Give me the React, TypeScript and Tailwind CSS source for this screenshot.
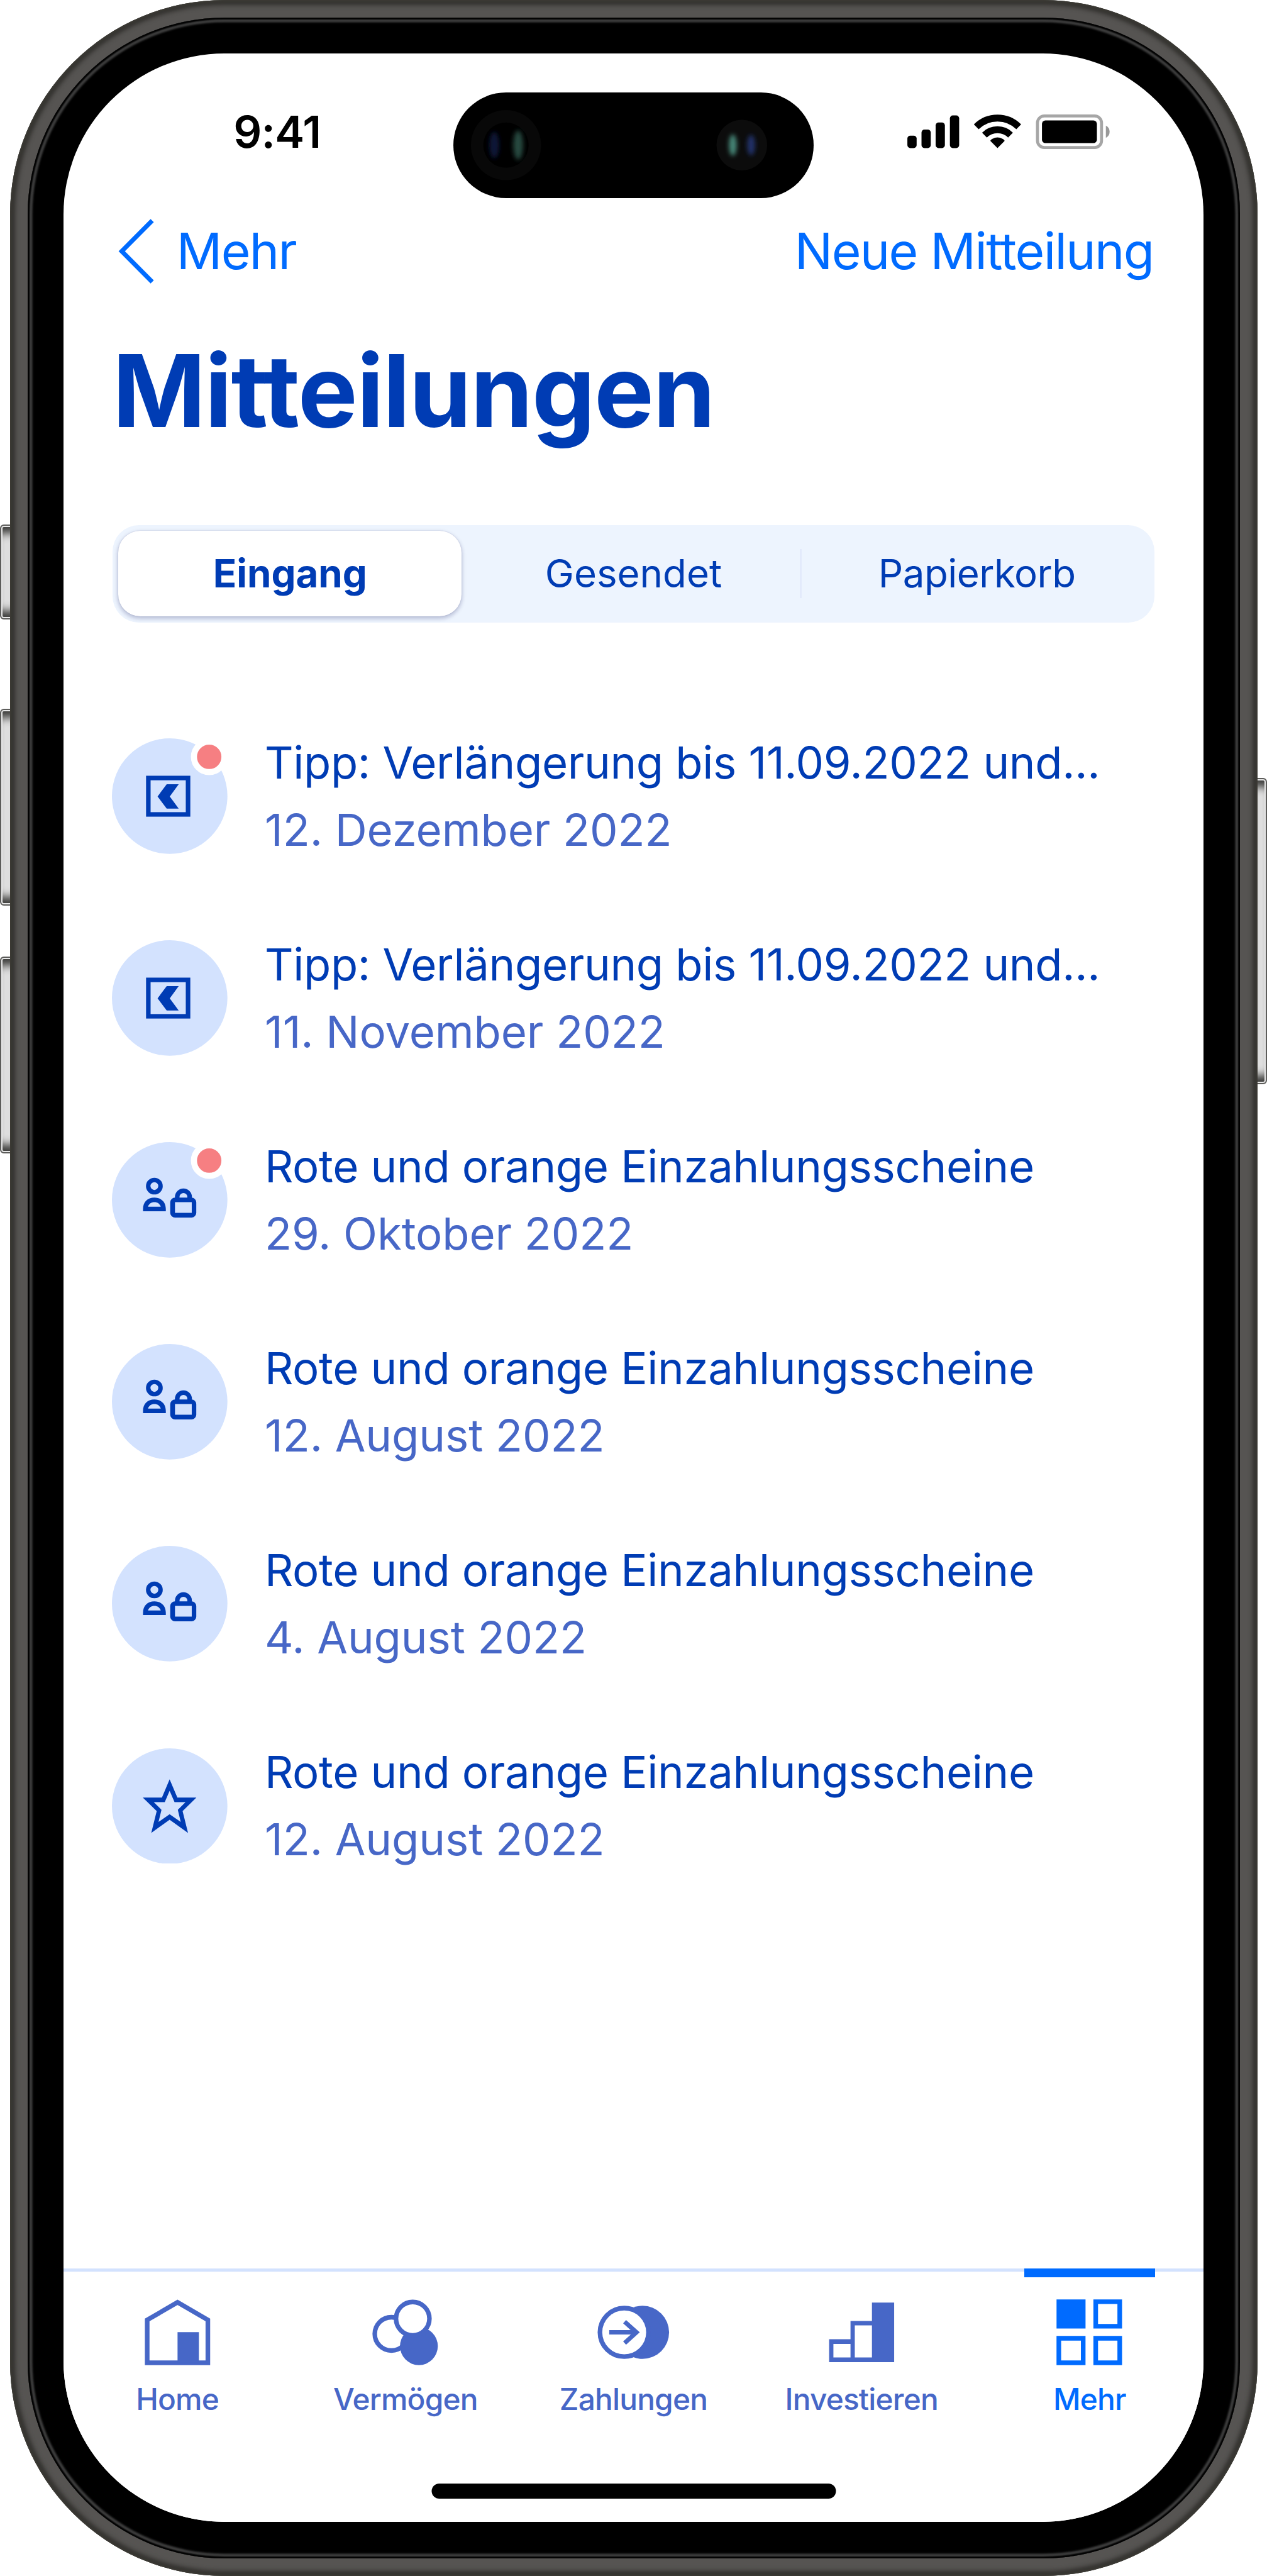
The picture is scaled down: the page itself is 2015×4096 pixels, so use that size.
import type { ReactNode } from "react";

type MessageKind = "tip" | "account" | "star";

interface Message {
  id: number;
  kind: MessageKind;
  title: string;
  date: string;
  unread?: boolean;
}

const MESSAGES: Message[] = [
  { id: 1, kind: "tip", title: "Tipp: Verlängerung bis 11.09.2022 und...", date: "12. Dezember 2022", unread: true },
  { id: 2, kind: "tip", title: "Tipp: Verlängerung bis 11.09.2022 und...", date: "11. November 2022" },
  { id: 3, kind: "account", title: "Rote und orange Einzahlungsscheine", date: "29. Oktober 2022", unread: true },
  { id: 4, kind: "account", title: "Rote und orange Einzahlungsscheine", date: "12. August 2022" },
  { id: 5, kind: "account", title: "Rote und orange Einzahlungsscheine", date: "4. August 2022" },
  { id: 6, kind: "star", title: "Rote und orange Einzahlungsscheine", date: "12. August 2022" },
];

/* ---------- message icons (237 x 237 grid) ---------- */

const MESSAGE_ICONS: Record<MessageKind, ReactNode> = {
  tip: (
    <>
      <rect x="74.7" y="81.4" width="81.5" height="74.7" fill="none" stroke="#003cb4" strokeWidth="9.3" />
      <path d="M93.7 119.2 112.4 94.2H137L118.7 119.2 137 144.2H112.4Z" fill="#003cb4" />
    </>
  ),
  account: (
    <>
      <circle cx="87.1" cy="90.3" r="12.6" fill="none" stroke="#003cb4" strokeWidth="9.2" />
      <path
        d="M63.8 142V137.5C63.8 123 73 113.8 87.2 113.8S110.6 123 110.6 137.5V142ZM74 132.6H100.2C98.4 126.5 93.4 123.2 87.2 123.2S75.8 126.5 74 132.6Z"
        fill="#003cb4"
        fillRule="evenodd"
      />
      <path
        d="M129.5 113.8H163.2A9.9 9.9 0 0 1 173.1 123.7V145A9.9 9.9 0 0 1 163.2 154.9H129.5A9.9 9.9 0 0 1 119.6 145V123.7A9.9 9.9 0 0 1 129.5 113.8ZM129.4 123.2V145.1H163.8V123.2Z"
        fill="#003cb4"
        fillRule="evenodd"
      />
      <path d="M134 115V112.5A12.75 12.75 0 0 1 159.5 112.5V115" fill="none" stroke="#003cb4" strokeWidth="9.4" />
    </>
  ),
  star: (
    <path
      d="M118.4 63.7 134.3 101H173.3L145 128.7 156.2 173.4 118.4 146.4 80.7 173.4 91.9 128.7 63.4 101H102.6ZM118.4 87 108.4 110.4H85.8L101.7 126 95.6 151 118.4 135 141.2 151 135.2 126 151 110.4H128.5Z"
      fill="#003cb4"
      fillRule="evenodd"
    />
  ),
};

function MessageIcon({ kind, unread }: { kind: MessageKind; unread?: boolean }) {
  return (
    <svg viewBox="0 0 237 237" className="size-[183.7px] shrink-0">
      <circle cx="118.5" cy="118.5" r="118.5" fill="#d3e2fe" />
      {MESSAGE_ICONS[kind]}
      {unread && <circle cx="199.6" cy="38" r="31.3" fill="#f67f82" stroke="#fff" strokeWidth="12.5" />}
    </svg>
  );
}

/* ---------- tab bar icons (156 x 156 grid) ---------- */

const HomeIcon = (
  <>
    <path d="M15.6 140.7V52.8L77.9 16.6 140.1 52.8V140.7Z" fill="none" stroke="currentColor" strokeWidth="9.5" />
    <path d="M77.9 77.8H121.7V140H77.9Z" fill="currentColor" />
  </>
);

const AssetsIcon = (
  <>
    <circle cx="49.7" cy="81.3" r="34.2" fill="none" stroke="currentColor" strokeWidth="9.4" />
    <circle cx="106.1" cy="106.6" r="38.8" fill="currentColor" />
    <circle cx="93.4" cy="50.1" r="34.3" fill="#fff" stroke="currentColor" strokeWidth="9.4" />
  </>
);

const PaymentsIcon = (
  <>
    <circle cx="96.6" cy="78.2" r="54.5" fill="currentColor" />
    <circle cx="59" cy="78.2" r="49.8" fill="#fff" stroke="currentColor" strokeWidth="9.5" />
    <path d="M28.3 78.2H83M59.8 56.3 84.2 78.2 59.8 100.1" fill="none" stroke="currentColor" strokeWidth="9" />
  </>
);

const InvestIcon = (
  <path
    d="M11.1 139.3V92.2H55V54.7H99V17.2H144.6V139.3ZM19.9 129.7H55V101.8H19.9ZM63.8 129.7H99V64H63.8Z"
    fill="currentColor"
    fillRule="evenodd"
  />
);

const MoreIcon = (
  <>
    <path d="M10.7 10.7H70.2V70.2H10.7Z" fill="currentColor" />
    <path
      d="M91.1 15.4H140.4V65.6H91.1ZM15.4 90.4H65.4V140.6H15.4ZM91.1 90.4H140.4V140.6H91.1Z"
      fill="none"
      stroke="currentColor"
      strokeWidth="9.5"
    />
  </>
);

const TABS = [
  { label: "Home", icon: HomeIcon },
  { label: "Vermögen", icon: AssetsIcon },
  { label: "Zahlungen", icon: PaymentsIcon },
  { label: "Investieren", icon: InvestIcon },
  { label: "Mehr", icon: MoreIcon, active: true },
];

/* ---------- status bar ---------- */

function DynamicIsland() {
  return (
    <div className="h-[167.5px] w-[573.5px] rounded-full bg-black">
      <svg viewBox="0 0 740 216" className="size-full">
        <defs>
          <filter id="glint" x="-100%" y="-50%" width="300%" height="200%">
            <feGaussianBlur stdDeviation="4.5" />
          </filter>
        </defs>
        <circle cx="108" cy="108" r="72" fill="#080808" />
        <circle cx="108" cy="108" r="46.5" fill="#000" />
        <ellipse cx="84" cy="108" rx="10" ry="27" fill="#101938" filter="url(#glint)" />
        <ellipse cx="133" cy="108" rx="10" ry="30" fill="#28493f" filter="url(#glint)" />
        <circle cx="592" cy="108" r="52" fill="#0c0c0c" />
        <ellipse cx="573.5" cy="108" rx="8" ry="22" fill="#468778" filter="url(#glint)" />
        <ellipse cx="611" cy="108" rx="8" ry="21" fill="#22336a" filter="url(#glint)" />
      </svg>
    </div>
  );
}

function StatusIcons() {
  return (
    <svg viewBox="0 0 416 71" className="h-[55px] w-[322.4px]">
      {/* signal */}
      <rect x="0" y="43.5" width="19" height="25.5" rx="6" />
      <rect x="29" y="31" width="19" height="38" rx="6" />
      <rect x="58" y="16.5" width="19" height="52.5" rx="6" />
      <rect x="87.3" y="2" width="19" height="67" rx="6" />
      {/* wifi */}
      <g fill="none" stroke="#000" strokeWidth="14">
        <path d="M141.4 25.4A62 62 0 0 1 228.6 25.4" />
        <path d="M158.3 42.3A38 38 0 0 1 211.7 42.3" />
      </g>
      <path d="M185 69 170.3 54.3Q171 51.5 174 50.2A22 22 0 0 1 196 50.2Q199 51.5 199.7 54.3Z" />
      {/* battery */}
      <rect x="267.1" y="3.1" width="131.5" height="64.8" rx="14" fill="none" stroke="#a6a6a6" strokeWidth="6.2" />
      <rect x="276.3" y="12.4" width="112.8" height="46.4" rx="7" />
      <path d="M407.5 23A14 14 0 0 1 407.5 48Z" fill="#999" />
    </svg>
  );
}

function StatusBar() {
  return (
    <div className="grid h-[229.4px] shrink-0 grid-cols-[1fr_auto_1fr] items-start pt-[62px]">
      <span className="mt-[27.5px] pl-[60px] text-center text-[70.6px] leading-none font-semibold tracking-[-0.8px] text-black">
        9:41
      </span>
      <DynamicIsland />
      <div className="mt-[34.9px] flex justify-end pr-[148.8px]">
        <StatusIcons />
      </div>
    </div>
  );
}

/* ---------- screen sections ---------- */

function NavBar() {
  return (
    <div className="flex h-[169.4px] shrink-0 items-center justify-between pr-[80px] pl-[78px] text-[80.3px] leading-none tracking-[-1.7px] text-[#006bff]">
      <div className="flex items-center">
        <svg viewBox="0 0 75 133" className="mr-[36px] ml-[8px] h-[103px] w-[58px]">
          <path d="M71.2 3.5 8.6 66.5 71.2 129.5" fill="none" stroke="currentColor" strokeWidth="9.3" />
        </svg>
        <span>Mehr</span>
      </div>
      <span>Neue Mitteilung</span>
    </div>
  );
}

function Segments() {
  return (
    <div className="mx-[78px] mt-[78px] grid h-[155px] shrink-0 grid-cols-3 rounded-[42px] bg-[#edf4fe] p-[9.4px] text-[61.8px] leading-none text-[#003cb4]">
      <div className="flex items-center justify-center rounded-[35px] bg-white font-bold shadow-[0_3px_6px_1px_rgba(0,10,80,0.22),0_0_2px_rgba(0,10,80,0.15)]">
        Eingang
      </div>
      <div className="flex items-center justify-center">Gesendet</div>
      <div className="relative flex items-center justify-center tracking-[-0.5px]">
        <span className="absolute -left-[9px] h-[78px] w-[3px] bg-[#e3eafb]" />
        Papierkorb
      </div>
    </div>
  );
}

function MessageRow({ message }: { message: Message }) {
  return (
    <li className="flex items-center gap-[59px]">
      <MessageIcon kind={message.kind} unread={message.unread} />
      <div className="-my-4 text-[70.7px] leading-[107px] whitespace-nowrap">
        <p className="tracking-[-0.36px] text-[#003cb4]">{message.title}</p>
        <p className="tracking-[-0.1px] text-[#4767c7]">{message.date}</p>
      </div>
    </li>
  );
}

function TabBar() {
  return (
    <nav className="relative mt-auto h-[403.5px] shrink-0 border-t-[5px] border-[#d3e2fe] bg-white">
      <div className="grid grid-cols-5">
        {TABS.map((tab) => (
          <div
            key={tab.label}
            className={`relative flex flex-col items-center pt-[36px] ${tab.active ? "text-[#006bff]" : "text-[#4767c7]"}`}
          >
            {tab.active && <span className="absolute -top-[5px] h-[14.3px] w-[207.5px] bg-[#006bff]" />}
            <svg viewBox="0 0 156 156" className="size-[120.9px]">
              {tab.icon}
            </svg>
            <span className="mt-[23px] text-[47.8px] leading-none font-[450] tracking-[-0.8px]">{tab.label}</span>
          </div>
        ))}
      </div>
      {/* home indicator */}
      <div className="absolute bottom-[37px] left-1/2 h-[24px] w-[643px] -translate-x-1/2 rounded-full bg-black" />
    </nav>
  );
}

/* ---------- device ---------- */

function SideButton({ className }: { className: string }) {
  return (
    <span
      className={`absolute w-[40px] rounded-[6px] border-2 border-[#5c5c5a] bg-[#dedede] shadow-[inset_0_0_0_2px_#e8e8e8,inset_0_22px_14px_-10px_#3a3a38,inset_0_-22px_14px_-10px_#3a3a38] ${className}`}
    />
  );
}

export default function App() {
  return (
    <div className="relative h-[4096px] w-[2015px] overflow-hidden bg-white font-[Inter,'Liberation_Sans',sans-serif]">
      <SideButton className="top-[833.5px] left-0 h-[151px]" />
      <SideButton className="top-[1126.5px] left-0 h-[313px]" />
      <SideButton className="top-[1520.5px] left-0 h-[313px]" />
      <SideButton className="top-[1237px] right-0 h-[487px]" />

      <div className="relative mx-auto h-[4095.5px] w-[1984px] rounded-[341px] bg-[#565452] p-[28px] shadow-[inset_0_0_5px_1.5px_#403f38,inset_0_0_7px_8px_#32312e]">
        <div className="h-full rounded-[313px] bg-black p-[57.3px] shadow-[inset_0_0_2px_3px_#000,inset_0_0_3px_7.5px_#3e3e3e]">
          <div className="flex h-full flex-col overflow-hidden rounded-[256px] bg-white">
            <StatusBar />
            <NavBar />
            <h1 className="flex h-[272.6px] shrink-0 items-center px-[78px] text-[159.5px] leading-none font-bold tracking-[-1.6px] text-[#003cb4]">
              Mitteilungen
            </h1>
            <Segments />
            <ul className="mt-[184.5px] flex flex-col gap-[137.4px] px-[77.5px]">
              {MESSAGES.map((message) => (
                <MessageRow key={message.id} message={message} />
              ))}
            </ul>
            <TabBar />
          </div>
        </div>
      </div>
    </div>
  );
}
